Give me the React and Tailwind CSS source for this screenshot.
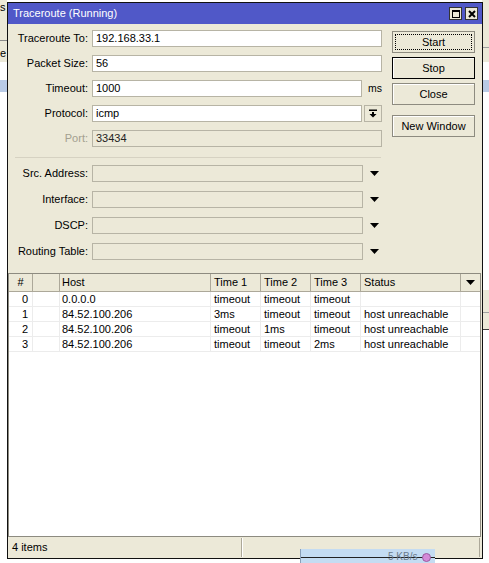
import React from 'react'

const ROWS = [
  { n: '0', host: '0.0.0.0', t1: 'timeout', t2: 'timeout', t3: 'timeout', status: '' },
  { n: '1', host: '84.52.100.206', t1: '3ms', t2: 'timeout', t3: 'timeout', status: 'host unreachable' },
  { n: '2', host: '84.52.100.206', t1: 'timeout', t2: '1ms', t3: 'timeout', status: 'host unreachable' },
  { n: '3', host: '84.52.100.206', t1: 'timeout', t2: 'timeout', t3: '2ms', status: 'host unreachable' }
]

const COLS = 'grid grid-cols-[24px_27px_151px_50px_50px_50px_100px_19px]'

function DownTri({ className = '' }) {
  return (
    <svg width="9" height="5" viewBox="0 0 9 5" className={className}>
      <path d="M0 0 H9 L4.5 5 Z" fill="#000" />
    </svg>
  )
}

function Field({ label, value = '', dim, disabled, w = 'w-[290px]', children }) {
  return (
    <div className="flex items-center h-[17px]">
      <div className={`w-[80px] text-right ${dim ? 'text-[#a3a08f]' : 'text-black'}`}>{label}</div>
      <div className={`ml-[4px] h-[17px] ${w} border border-[#b7b4a5] ${disabled ? 'bg-[#ece9d8] text-[#222]' : 'bg-white'} pl-[3px] flex items-center`}>{value}</div>
      {children}
    </div>
  )
}

function Btn({ children, variant }) {
  if (variant === 'focus') {
    return (
      <div className="h-[22px] w-[83px] border border-[#8d8b80] bg-[#ece9d8] p-[2px]">
        <div className="h-full w-full border border-dotted border-black flex items-center justify-center">{children}</div>
      </div>
    )
  }
  return (
    <div className={`h-[22px] w-[83px] border ${variant === 'default' ? 'border-black' : 'border-[#8d8b80]'} bg-[#ece9d8] flex items-center justify-center shadow-[inset_1px_1px_0_#fff]`}>{children}</div>
  )
}

export default function App() {
  return (
    <div className="relative w-[489px] h-[563px] bg-white overflow-hidden font-['Liberation_Sans',Arial,sans-serif] text-[11px] leading-none text-black">
      {/* background behind the window */}
      <div className="absolute left-0 top-0 w-[7px] h-[62px] bg-[#ece9d8]">
        <div className="absolute left-[0px] top-[2px] text-[11px]">s</div>
        <div className="absolute left-0 top-[40px] w-full h-px bg-[#8a8a8a]" />
        <div className="absolute left-[0px] top-[48px] text-[11px]">e</div>
      </div>
      <div className="absolute left-0 top-[80px] w-[7px] h-[12px] bg-[#b9cbe6]" />
      <div className="absolute right-0 top-0 w-[7px] h-[62px] bg-[#ece9d8]">
        <div className="absolute left-0 top-[47px] w-full h-px bg-[#a0a0a0]" />
      </div>
      <div className="absolute right-0 top-[80px] w-[7px] h-[12px] bg-[#b9cbe6]" />
      <div className="absolute right-0 top-[290px] w-[7px] h-[40px] bg-[#ece9d8]">
        <div className="absolute left-0 top-[22px] w-full h-px bg-[#a0a0a0]" />
        <div className="absolute left-0 top-[39px] w-full h-px bg-[#404040]" />
      </div>

      {/* window */}
      <div className="absolute left-[7px] top-[2px] w-[476px] h-[557px] border border-[#111] bg-[#ece9d8] flex flex-col">
        <div className="h-[21px] bg-[#5058c8] flex items-center pl-[5px] pr-[4px]">
          <span className="text-white text-[11px]">Traceroute (Running)</span>
          <div className="ml-auto flex gap-[3px]">
            <div className="w-[13px] h-[13px] bg-[#ece9d8] border border-[#333] flex items-center justify-center">
              <div className="w-[8px] h-[8px] border border-black border-t-2" />
            </div>
            <div className="w-[13px] h-[13px] bg-[#ece9d8] border border-[#333] flex items-center justify-center">
              <svg width="8" height="8" viewBox="0 0 8 8">
                <path d="M1 1 L7 7 M7 1 L1 7" stroke="#000" strokeWidth="2" />
              </svg>
            </div>
          </div>
        </div>

        <div className="flex">
          <div className="flex flex-col pt-[6px]">
            <div className="flex flex-col gap-[8px]">
              <Field label="Traceroute To:" value="192.168.33.1" />
              <Field label="Packet Size:" value="56" />
              <Field label="Timeout:" value="1000" w="w-[270px]">
                <span className="ml-[6px] text-[10.5px]">ms</span>
              </Field>
              <Field label="Protocol:" value="icmp" w="w-[270px]">
                <div className="ml-[2px] w-[18px] h-[17px] border border-[#b7b4a5] bg-[#ece9d8] flex items-center justify-center">
                  <svg width="8" height="9" viewBox="0 0 8 9">
                    <path d="M0 0.5 H8 V2 H0 Z" fill="#000" />
                    <path d="M3 3 H5 V5 H7.5 L4 8.5 L0.5 5 H3 Z" fill="#000" />
                  </svg>
                </div>
              </Field>
              <Field label="Port:" value="33434" dim disabled />
            </div>
            <div className="mt-[10px] ml-[7px] w-[366px] h-px bg-[#d6d2c2]" />
            <div className="mt-[7px] flex flex-col gap-[9px]">
              {['Src. Address:', 'Interface:', 'DSCP:', 'Routing Table:'].map(l => (
                <Field key={l} label={l} disabled w="w-[271px]">
                  <DownTri className="ml-[7px]" />
                </Field>
              ))}
            </div>
          </div>
          <div className="ml-[10px] pt-[7px] flex flex-col">
            <Btn variant="focus">Start</Btn>
            <div className="mt-[4px]"><Btn variant="default">Stop</Btn></div>
            <div className="mt-[4px]"><Btn>Close</Btn></div>
            <div className="mt-[10px]"><Btn>New Window</Btn></div>
          </div>
        </div>

        {/* table */}
        <div className="mt-[13px] mr-[1px] flex-1 border border-[#8d8b80] bg-white flex flex-col">
          <div className={`${COLS} h-[18px] bg-[#ece9d8] border-b border-[#aca899]`}>
            <div className="border-r border-[#aca899] flex items-center justify-center">#</div>
            <div className="border-r border-[#aca899]" />
            <div className="border-r border-[#aca899] flex items-center pl-[2px]">Host</div>
            <div className="border-r border-[#aca899] flex items-center pl-[3px]">Time 1</div>
            <div className="border-r border-[#aca899] flex items-center pl-[3px]">Time 2</div>
            <div className="border-r border-[#aca899] flex items-center pl-[3px]">Time 3</div>
            <div className="border-r border-[#aca899] flex items-center pl-[3px]">Status</div>
            <div className="flex items-center justify-center"><DownTri /></div>
          </div>
          {ROWS.map(r => (
            <div key={r.n} className={`${COLS} h-[15px] border-b border-[#ececec]`}>
              <div className="border-r border-[#ececec] flex items-center justify-end pr-[4px]">{r.n}</div>
              <div className="border-r border-[#ececec]" />
              <div className="border-r border-[#ececec] flex items-center pl-[2px]">{r.host}</div>
              <div className="border-r border-[#ececec] flex items-center pl-[3px]">{r.t1}</div>
              <div className="border-r border-[#ececec] flex items-center pl-[3px]">{r.t2}</div>
              <div className="border-r border-[#ececec] flex items-center pl-[3px]">{r.t3}</div>
              <div className="border-r border-[#ececec] flex items-center pl-[3px]">{r.status}</div>
              <div />
            </div>
          ))}
        </div>

        {/* status bar */}
        <div className="h-[21px] flex items-stretch pt-[1px] pb-[1px]">
          <div className="w-[234px] flex items-center pl-[4px] border-r border-[#aca899] shadow-[1px_0_0_#fff]">4 items</div>
          <div className="flex-1 mr-[2px] border-r border-[#aca899]" />
        </div>
      </div>

      {/* taskbar fragment over the bottom edge */}
      <div className="absolute left-[300px] top-[549px] w-[135px] h-[14px] bg-[#c4dcf2] border-l border-[#8aa0b8]">
        <div className="absolute left-0 top-[8px] w-full h-px bg-[#222]" />
        <span className="absolute left-[87px] top-[3px] text-[10px] text-[#6a7a8a]">5 KB/s</span>
        <div className="absolute left-[121px] top-[4px] w-[9px] h-[9px] rounded-full bg-[#d48ad8] border border-[#9a5aa0]" />
      </div>
    </div>
  )
}
